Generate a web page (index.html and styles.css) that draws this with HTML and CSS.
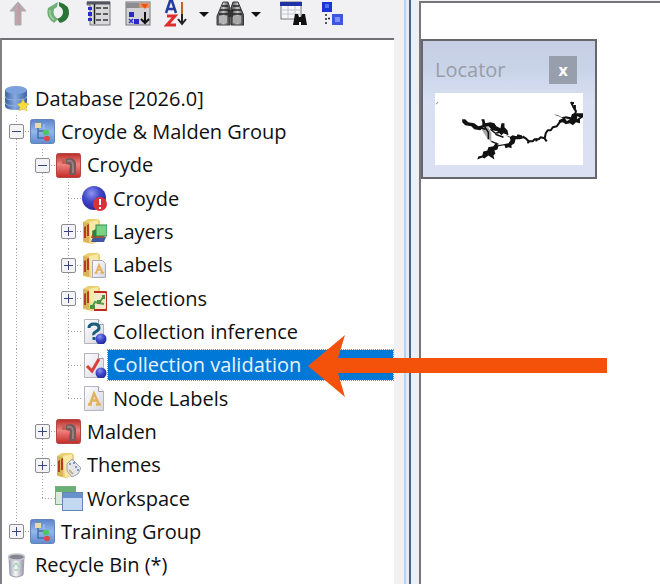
FILE: index.html
```html
<!DOCTYPE html>
<html lang="en">

<head>
  <meta charset="UTF-8">
  <meta name="viewport" content="width=device-width, initial-scale=1.0">
  <title>Database Explorer</title>
  <link rel="stylesheet" href="styles.css">
</head>

<body>

  <!-- Shared icon symbols -->
  <svg class="symbols" aria-hidden="true">
    <defs>
      <linearGradient id="blue-g" x1="0" y1="0" x2="0" y2="1">
        <stop offset="0" stop-color="#5d83c8"/><stop offset="0.5" stop-color="#92b8ea"/><stop offset="1" stop-color="#5f8bd0"/>
      </linearGradient>
      <linearGradient id="red-g" x1="0" y1="0" x2="0" y2="1">
        <stop offset="0" stop-color="#b82c28"/><stop offset="0.45" stop-color="#f08480"/><stop offset="1" stop-color="#c42a26"/>
      </linearGradient>
      <linearGradient id="db-g">
        <stop offset="0" stop-color="#3b5f9e"/><stop offset="0.45" stop-color="#86aae0"/><stop offset="1" stop-color="#3c62a8"/>
      </linearGradient>
      <linearGradient id="page-g" x1="0" y1="0" x2="1" y2="1">
        <stop offset="0" stop-color="#ffffff"/><stop offset="1" stop-color="#d5d5e0"/>
      </linearGradient>
      <linearGradient id="bin-g">
        <stop offset="0" stop-color="#a2a2b2"/><stop offset="0.45" stop-color="#f8f8fc"/><stop offset="1" stop-color="#9292a4"/>
      </linearGradient>
      <linearGradient id="metal-g">
        <stop offset="0" stop-color="#444"/><stop offset="0.5" stop-color="#c4c4c4"/><stop offset="1" stop-color="#333"/>
      </linearGradient>
      <radialGradient id="ball-g" cx="0.4" cy="0.3" r="0.8">
        <stop offset="0" stop-color="#8d94f0"/><stop offset="0.45" stop-color="#3f46c8"/><stop offset="1" stop-color="#1c2090"/>
      </radialGradient>
    </defs>
    <symbol id="i-group" viewBox="0 0 25 25">
      <rect x="0.5" y="0.5" width="24" height="24" rx="2" fill="url(#blue-g)" stroke="#6684b8"/>
      <path d="M8 9v10h6M8 12h6" fill="none" stroke="#4a6ca4" stroke-width="1.5"/>
      <rect x="5" y="4" width="6" height="5" fill="#e8dca4"/>
      <rect x="13" y="11" width="6" height="5" rx="2" fill="#4cc85c"/>
      <rect x="14" y="17" width="6" height="5" rx="2" fill="#e04848"/>
      <path d="M14 10v-5" stroke="#a9c6f2"/>
    </symbol>
    <symbol id="i-network" viewBox="0 0 25 25">
      <rect x="0.5" y="0.5" width="24" height="24" rx="2" fill="url(#red-g)" stroke="#b04844"/>
      <path d="M10 6q8-3 10 4v12h-7v-4l1-6-4-1z" fill="#755a5a"/>
      <path d="M6 5h4v6H6z" fill="#c25e5a"/>
      <path d="M11 8q6-1 6 4v8" fill="none" stroke="#94807f" stroke-width="2"/>
    </symbol>
    <symbol id="i-folder" viewBox="0 0 25 25">
      <path d="M1 3L6 0h10l2 2v20l-8 3-9-2z" fill="#ebcf70"/>
      <path d="M1 3l6 1v20l-6-2z" fill="#d9b45a"/>
      <path d="M7 3l9-2 1 21-8 2z" fill="#f8e9a7"/>
      <path d="M2 8l2-1v12H2zM5 6l2-1v12H5z" fill="#b63b25"/>
    </symbol>
    <symbol id="i-page" viewBox="0 0 25 25">
      <path d="M2.500.500h14l5 5v19h-19z" fill="url(#page-g)" stroke="#b4b4c0"/>
      <path d="M16.500.500v5h5" fill="#fff" stroke="#9c9cac"/>
    </symbol>
    <symbol id="i-letter" viewBox="0 0 14 14">
      <path d="M1 13h4M9 13h5M3 13L7 2l5 11M5 9h5" fill="none" stroke="#e3b25c" stroke-width="2.500"/>
    </symbol>
  </svg>

  <div class="app">
    <aside class="sidebar">
      <div class="toolbar" role="toolbar" aria-label="Explorer tools">
        <button type="button" class="tool" aria-label="Up one level">
          <svg viewBox="0 0 28 28">
            <path d="M14 2l8 9h-5v14h-6V11H6z" fill="#b9a7ad" stroke="#a5b0ac"/>
            <path d="M15 4v20" stroke="#c69aa5" stroke-width="2"/>
          </svg>
        </button>
        <button type="button" class="tool" aria-label="Refresh">
          <svg viewBox="0 0 28 28">
            <path d="M14 2L4 8q-3 9 6 15l4-4q-6-4-4-10l3-2z" fill="#6fb077"/>
            <path d="M15 2q11 3 10 12-1 7-9 9l-3-4q6-2 6-7 0-4-4-6z" fill="#2b7437"/>
            <path d="M6 10q-1 6 4 10" fill="none" stroke="#a2d0a4" stroke-width="1.500"/>
          </svg>
        </button>
        <button type="button" class="tool" aria-label="Details">
          <svg viewBox="0 0 28 28">
            <path d="M3 2h23v23H6V5H3z" fill="#d8d8da" stroke="#77777d"/>
            <path d="M3 3h23" stroke="#55555f" stroke-width="3"/>
            <path d="M10.500 4v20" stroke="#222" stroke-width="1.500"/>
            <path d="M4 7h4v3H4zM4 12h4v4H4zM4 18h4v3H4z" fill="#2a2ad0"/>
            <path d="M12 8h5M19 8h5M12 14h5M19 14h5M12 20h5M19 20h5" stroke="#333" stroke-width="1.500"/>
          </svg>
        </button>
        <button type="button" class="tool" aria-label="Filter view">
          <svg viewBox="0 0 28 28">
            <rect x="2" y="2" width="24" height="23" fill="#d2d2d6" stroke="#76767c"/>
            <path d="M2 3h24v5H2z" fill="#8c8c90"/>
            <path d="M15 3h11v5H15z" fill="#dc9468"/>
            <path d="M17 4h7l-3 5z" fill="#e85414"/>
            <path d="M5 12h5v5H5zM10 19h5v5h-5z" fill="#2929c8"/>
            <path d="M5 19l4 4m0-4l-4 4" stroke="#3434c4" stroke-width="1.500"/>
            <path d="M21 12v11m-4-4l4 4 4-4" fill="none" stroke="#111" stroke-width="2"/>
          </svg>
        </button>
        <div class="split">
          <button type="button" class="tool" aria-label="Sort">
            <svg viewBox="0 0 28 28">
              <path d="M2 13L6 1h2l4 12M4 9h7" fill="none" stroke="#263da0" stroke-width="2.500"/>
              <path d="M3 16h8L3 25h9" fill="none" stroke="#e02d2d" stroke-width="3"/>
              <path d="M18 2v14" stroke="#c2602c" stroke-width="2"/>
              <path d="M18 14v10m-4-5l4 5 4-5" fill="none" stroke="#222" stroke-width="2"/>
            </svg>
          </button>
          <button type="button" class="caret" aria-label="Sort options"></button>
          <button type="button" class="tool" aria-label="Find">
            <svg viewBox="0 0 28 28">
              <path d="M7 2h5l2 6v17H1v-9z" fill="url(#metal-g)" stroke="#444"/>
              <path d="M17 2h5l6 14v9H15V8z" fill="url(#metal-g)" stroke="#333"/>
              <path d="M6 6h6M4 10h9M3 14h10M17 6h6M16 10h9M16 14h10M12 11h5" stroke="#222" stroke-width="1.500"/>
              <rect x="3" y="16" width="8" height="7" fill="#b4b4b4"/>
              <rect x="17" y="16" width="8" height="7" fill="#a8a8a8"/>
              <rect x="12" y="11" width="5" height="6" fill="#333"/>
            </svg>
          </button>
          <button type="button" class="caret" aria-label="Find options"></button>
        </div>
        <button type="button" class="tool" aria-label="Search in grid">
          <svg viewBox="0 0 28 28">
            <rect x="1" y="2" width="20" height="17" fill="#f7f7fb" stroke="#777"/>
            <path d="M0 2h22v4H0z" fill="#1d33a4"/>
            <path d="M1 10h20M1 14h20M8 6v13M15 6v13" stroke="#c4c4ce"/>
            <path d="M15 14h3l1 3h2l1-3h3l2 11h-6v-3h-2v3h-6z" fill="#111"/>
          </svg>
        </button>
        <button type="button" class="tool" aria-label="Locate in tree">
          <svg viewBox="0 0 28 28">
            <rect x="2" y="2" width="10" height="10" fill="#1c34d0"/>
            <rect x="5" y="4" width="4" height="4" fill="#5470f2"/>
            <path d="M6 14v10M8 18.500h5" stroke="#222" stroke-width="1.500" stroke-dasharray="2 2"/>
            <rect x="12" y="14" width="11" height="11" fill="#3d58de"/>
            <rect x="15" y="17" width="5" height="5" fill="#7c92f6"/>
          </svg>
        </button>
      </div>

      <div class="panel">
        <ul class="tree">
          <li class="node">
            <span class="icon">
              <svg viewBox="0 0 25 25">
                <path d="M1 4v16q0 4 11 4t11-4V4z" fill="url(#db-g)"/>
                <ellipse cx="12" cy="4" rx="11" ry="4" fill="#7ba1dc"/>
                <path d="M1 10q0 4 11 4t11-4M1 16q0 4 11 4t11-4" fill="none" stroke="#8fb0e2"/>
                <path d="M19 13l2 4 4 1-3 3 1 4-4-2-4 2 1-4-3-3 4-1z" fill="#f6dc3c" stroke="#d8b52c" stroke-width="0.500"/>
              </svg>
            </span>
            <span class="label">Database [2026.0]</span>
          </li>
          <li class="node">
            <span class="guide tee"><button type="button" class="toggle open" aria-label="Collapse"></button></span>
            <span class="icon"><svg><use href="#i-group"/></svg></span>
            <span class="label">Croyde &amp; Malden Group</span>
          </li>
          <li class="node">
            <span class="guide line"></span>
            <span class="guide tee"><button type="button" class="toggle open" aria-label="Collapse"></button></span>
            <span class="icon"><svg><use href="#i-network"/></svg></span>
            <span class="label">Croyde</span>
          </li>
          <li class="node">
            <span class="guide line"></span>
            <span class="guide line"></span>
            <span class="guide tee"></span>
            <span class="icon">
              <svg viewBox="0 0 25 25">
                <circle cx="12" cy="12" r="12" fill="url(#ball-g)"/>
                <circle cx="18" cy="18" r="7" fill="#da3038"/>
                <path d="M18 13v6M18 21v2" stroke="#fff" stroke-width="2"/>
              </svg>
            </span>
            <span class="label">Croyde</span>
          </li>
          <li class="node">
            <span class="guide line"></span>
            <span class="guide line"></span>
            <span class="guide tee"><button type="button" class="toggle" aria-label="Expand"></button></span>
            <span class="icon">
              <svg viewBox="0 0 25 25">
                <use href="#i-folder"/>
                <path d="M11 18h13l-2 5H9z" fill="#3e58a4"/>
                <path d="M11 13h13l-2 6H9z" fill="#b74a2f"/>
                <path d="M10 12l4-2v8h-3z" fill="#357d3e"/>
                <rect x="14" y="6" width="11" height="11" fill="#79d285" stroke="#348743"/>
              </svg>
            </span>
            <span class="label">Layers</span>
          </li>
          <li class="node">
            <span class="guide line"></span>
            <span class="guide line"></span>
            <span class="guide tee"><button type="button" class="toggle" aria-label="Expand"></button></span>
            <span class="icon">
              <svg viewBox="0 0 25 25">
                <use href="#i-folder"/>
                <path d="M10.500 7.500h10l3 3v14h-13z" fill="url(#page-g)" stroke="#a9a9b6"/>
                <use href="#i-letter" x="12" y="10" width="10" height="11"/>
              </svg>
            </span>
            <span class="label">Labels</span>
          </li>
          <li class="node">
            <span class="guide line"></span>
            <span class="guide line"></span>
            <span class="guide tee"><button type="button" class="toggle" aria-label="Expand"></button></span>
            <span class="icon">
              <svg viewBox="0 0 25 25">
                <use href="#i-folder"/>
                <path d="M12 6h11q2 0 2 2v14q0 2-2 2H12" fill="#f2e8cb" stroke="#bd2a1f" stroke-width="2"/>
                <path d="M10 21l3-5 4 1 5-7M17 17l5 1" fill="none" stroke="#5a9d50" stroke-width="2"/>
                <path d="M8 19h5v4H8zM15 14h4v4h-4zM20 9h3v4h-3z" fill="#4c9444"/>
              </svg>
            </span>
            <span class="label">Selections</span>
          </li>
          <li class="node">
            <span class="guide line"></span>
            <span class="guide line"></span>
            <span class="guide tee"></span>
            <span class="icon">
              <svg viewBox="0 0 25 25">
                <use href="#i-page"/>
                <path d="M7 9q0-4 5-4t5 4q0 2-3 3.500t-2 3.500M12 18v3" fill="none" stroke="#1c5b78" stroke-width="3"/>
                <circle cx="19" cy="20" r="5.500" fill="url(#ball-g)"/>
              </svg>
            </span>
            <span class="label">Collection inference</span>
          </li>
          <li class="node selected">
            <span class="guide line"></span>
            <span class="guide line"></span>
            <span class="guide tee"></span>
            <span class="icon">
              <svg viewBox="0 0 25 25">
                <use href="#i-page"/>
                <path d="M5 13l5 5 7-12" fill="none" stroke="#d8403c" stroke-width="3"/>
                <circle cx="19" cy="20" r="5.500" fill="url(#ball-g)"/>
              </svg>
            </span>
            <span class="label">Collection validation</span>
          </li>
          <li class="node">
            <span class="guide line"></span>
            <span class="guide line"></span>
            <span class="guide elbow"></span>
            <span class="icon">
              <svg viewBox="0 0 25 25">
                <use href="#i-page"/>
                <use href="#i-letter" x="5" y="5" width="14" height="15"/>
              </svg>
            </span>
            <span class="label">Node Labels</span>
          </li>
          <li class="node">
            <span class="guide line"></span>
            <span class="guide tee"><button type="button" class="toggle" aria-label="Expand"></button></span>
            <span class="icon"><svg><use href="#i-network"/></svg></span>
            <span class="label">Malden</span>
          </li>
          <li class="node">
            <span class="guide line"></span>
            <span class="guide tee"><button type="button" class="toggle" aria-label="Expand"></button></span>
            <span class="icon">
              <svg viewBox="0 0 25 25">
                <use href="#i-folder"/>
                <path d="M11 11l5-5 9 9-3 6-6 3-5-6z" fill="#e4e6ea" stroke="#a0a4ac"/>
                <path d="M13 11h2M17 10h2M19 14h2M21 17h2" stroke="#7d9cb8" stroke-width="2"/>
                <path d="M13 17l4 4" stroke="#c9b27a" stroke-width="2"/>
              </svg>
            </span>
            <span class="label">Themes</span>
          </li>
          <li class="node">
            <span class="guide line"></span>
            <span class="guide elbow"></span>
            <span class="icon">
              <svg class="wide" viewBox="0 0 28 25">
                <rect x="0.500" y="0.500" width="20" height="18" fill="#d9ecd9" stroke="#79ae80"/>
                <path d="M1 1h20v5H1z" fill="#68b073"/>
                <rect x="7.500" y="6.500" width="20" height="18" fill="#c3d9f2" stroke="#6486b4"/>
                <path d="M8 7h19v5H8z" fill="#6992cc"/>
              </svg>
            </span>
            <span class="label">Workspace</span>
          </li>
          <li class="node">
            <span class="guide elbow"><button type="button" class="toggle" aria-label="Expand"></button></span>
            <span class="icon"><svg><use href="#i-group"/></svg></span>
            <span class="label">Training Group</span>
          </li>
          <li class="node">
            <span class="icon">
              <svg viewBox="0 0 25 25">
                <path d="M5 4l1 18q6 4 13 0l1-18z" fill="url(#bin-g)" stroke="#9c9cac"/>
                <ellipse cx="12.500" cy="4" rx="8" ry="3" fill="#85858f" stroke="#c4c4d0" stroke-width="1.500"/>
                <path d="M9 14l3-4 3 4M10 17h5" fill="none" stroke="#a5d8b2" stroke-width="1.500"/>
              </svg>
            </span>
            <span class="label">Recycle Bin (*)</span>
          </li>
        </ul>
      </div>
    </aside>

    <div class="splitter" role="separator" aria-orientation="vertical"></div>

    <main class="workspace">
      <section class="locator">
        <header class="locator-head">
          <h2>Locator</h2>
          <button type="button" class="close" aria-label="Close locator">x</button>
        </header>
        <svg class="map" viewBox="0 0 147 72">
          <path d="M1 11l2-2" stroke="#999"/>
          <path d="M45 34l8 0 3 6 0 9-4-4-4-6z" fill="#a8a8a8"/>
          <g fill="#111">
            <path d="M27 26l3 0 3 3 6 1 4 3 4-1 0-3-1-3 3 0 1 4 5-1 4 1 2 3 4 2 1-5 3 0 0 4 3 3 1 5-5-2-2 2-4-4-5-1-4-4-5 1-3 3-6-1-3-3-6-1-3-3z"/>
            <path d="M70 42l4 2 3-2 4 1 1-2 4 1 2 3-4 1-4 0-1 4-3 2 0 3-3-1-3 1-1-3-6 1-1 3-3 1 1 3-2 2 1 4-3-2-3-2-4 3-2-1-5 2 1-3 4-1 1-4 4-1 1-3 5-1 3-4 1 3 6-1 5-1 2-3-1-4z"/>
            <path d="M118 21l4 1 4 2 4-1 5 1 1-3 2-1 3 0 6 0 0 4-3 2 0 4-4-1-3 3-3-2-4 1-3-2-4 1 0-3 4-2-4-2-3-1z"/>
          </g>
          <g fill="none" stroke="#111" stroke-linejoin="bevel" stroke-width="1.500">
            <path d="M49 33l4 6 0 7M44 34l6 2M56 48l7 3M55 36l5 4 4-1M60 41l8 3"/>
            <path d="M87 43l3 2 3 3 4 0 2-2 4 0 2-2 4 1 1-5 2-3 3 0 2-3 4-1 3-4M108 44l3 4M92 48l1 2M100 45l1 3" stroke-width="2"/>
            <path d="M135 9l3 6 2 3-1 4M139 12l0 4M136 10l2 0" stroke-width="2"/>
          </g>
          <path d="M129 25l5 1-3 2zM141 23l3 1-3 2z" fill="#ddd"/>
        </svg>
      </section>
    </main>

    <!-- Callout pointing at the selected node -->
    <svg class="callout" viewBox="0 0 300 62" aria-hidden="true">
      <path d="M1 31L38 0l-7 23h269v15H31l7 24z" fill="#f4510b"/>
    </svg>
  </div>

</body>

</html>
```
FILE: styles.css
```css
* {
  box-sizing: border-box;
}

body {
  margin: 0;
  font-family: "Open Sans", "Noto Sans", sans-serif;
  font-size: 20px;
  color: #101010;
  background-color: #f1f0f3;
}

button {
  padding: 0;
  border: none;
  background: none;
  font-family: inherit;
  cursor: pointer;
}

.symbols {
  position: absolute;
  width: 0;
  height: 0;
}

.app {
  position: relative;
  display: flex;
  min-height: 100vh;
}

/* Sidebar */
.sidebar {
  display: flex;
  flex-direction: column;
  flex: 0 0 404px;
}

.toolbar {
  display: flex;
  gap: 12px;
  height: 38px;
  padding-left: 4px;
}

.split {
  display: flex;
}

.tool {
  width: 28px;
  height: 28px;
}

.tool svg {
  display: block;
  width: 28px;
  height: 28px;
}

.caret {
  width: 24px;
  height: 28px;
}

.caret::before {
  content: "";
  display: block;
  width: 0;
  margin: 0 auto;
  border: 5px solid transparent;
  border-top-color: #111;
  border-bottom: none;
}

.panel {
  display: flex;
  flex: 1;
  margin-right: 10px;
  padding: 42px 1px 2px 1px;
  background-color: #fff;
  border-top: 2px solid #707074;
  border-left: 2px solid #808084;
}

/* Tree */
.tree {
  display: grid;
  grid-auto-rows: minmax(32px, 1fr);
  flex: 1;
  margin: 0;
  padding: 0;
  list-style: none;
}

.node {
  display: flex;
}

.guide {
  display: flex;
  align-items: center;
  justify-content: center;
  width: 26px;
  background-repeat: no-repeat;
}

.line,
.tee,
.elbow {
  background-image: repeating-linear-gradient(#a0a0a0 0 1px, transparent 1px 3px);
  background-position: 13px 0;
  background-size: 1px 100%;
}

.tee,
.elbow {
  background-image:
    repeating-linear-gradient(#a0a0a0 0 1px, transparent 1px 3px),
    repeating-linear-gradient(90deg, #a0a0a0 0 1px, transparent 1px 3px);
  background-position: 13px 0, 13px 50%;
  background-size: 1px 100%, 13px 1px;
}

.elbow {
  background-size: 1px 50%, 13px 1px;
}

.toggle {
  width: 15px;
  height: 15px;
  border: 1px solid #8c8c90;
  border-radius: 2px;
  background: linear-gradient(#36477c, #36477c) center / 9px 1px no-repeat,
    linear-gradient(#36477c, #36477c) center / 1px 9px no-repeat,
    #f4f4f6;
}

.toggle.open {
  background: linear-gradient(#36477c, #36477c) center / 9px 1px no-repeat, #f4f4f6;
}

.icon {
  display: flex;
  align-items: center;
  justify-content: center;
  width: 27px;
}

.icon svg {
  flex: none;
  width: 25px;
  height: 25px;
}

.icon .wide {
  width: 28px;
}

.label {
  align-self: center;
  padding: 0 5px;
  line-height: 30px;
  white-space: nowrap;
}

.selected .label {
  flex: 1;
  color: #e8f4ff;
  background-color: #0078d7;
  outline: 1px dotted #b08050;
}

/* Splitter */
.splitter {
  flex: 0 0 15px;
  background: linear-gradient(90deg, #b5d3f3 0 2px, #e4eaf5 2px 5px, #4a6484 5px 7px, #e9f0fa 7px 12px, #efeff2 12px);
  cursor: col-resize;
}

/* Workspace */
.workspace {
  flex: 1;
  margin-top: 1px;
  padding-top: 36px;
  background-color: #fff;
  border-top: 2px solid #77777b;
  border-left: 2px solid #77777b;
}

.locator {
  width: 176px;
  padding: 14px 12px 12px;
  border: 2px solid #66666c;
  background: linear-gradient(#c5cee2 0, #cad4e9 30px, #d8e0f2 60px, #dbe1f3 100%);
}

.locator-head {
  display: flex;
  align-items: center;
  justify-content: space-between;
  padding-right: 6px;
  margin-bottom: 8px;
}

.locator h2 {
  margin: 0;
  font-size: 20px;
  font-weight: 400;
  line-height: 30px;
  color: #999da6;
}

.close {
  width: 28px;
  height: 28px;
  font-size: 16px;
  font-weight: 700;
  line-height: 24px;
  color: #fff;
  background-color: #979eac;
}

.map {
  display: block;
  width: 100%;
  background-color: #fff;
}

.callout {
  position: absolute;
  top: 335px;
  left: 307px;
  width: 300px;
}
```
